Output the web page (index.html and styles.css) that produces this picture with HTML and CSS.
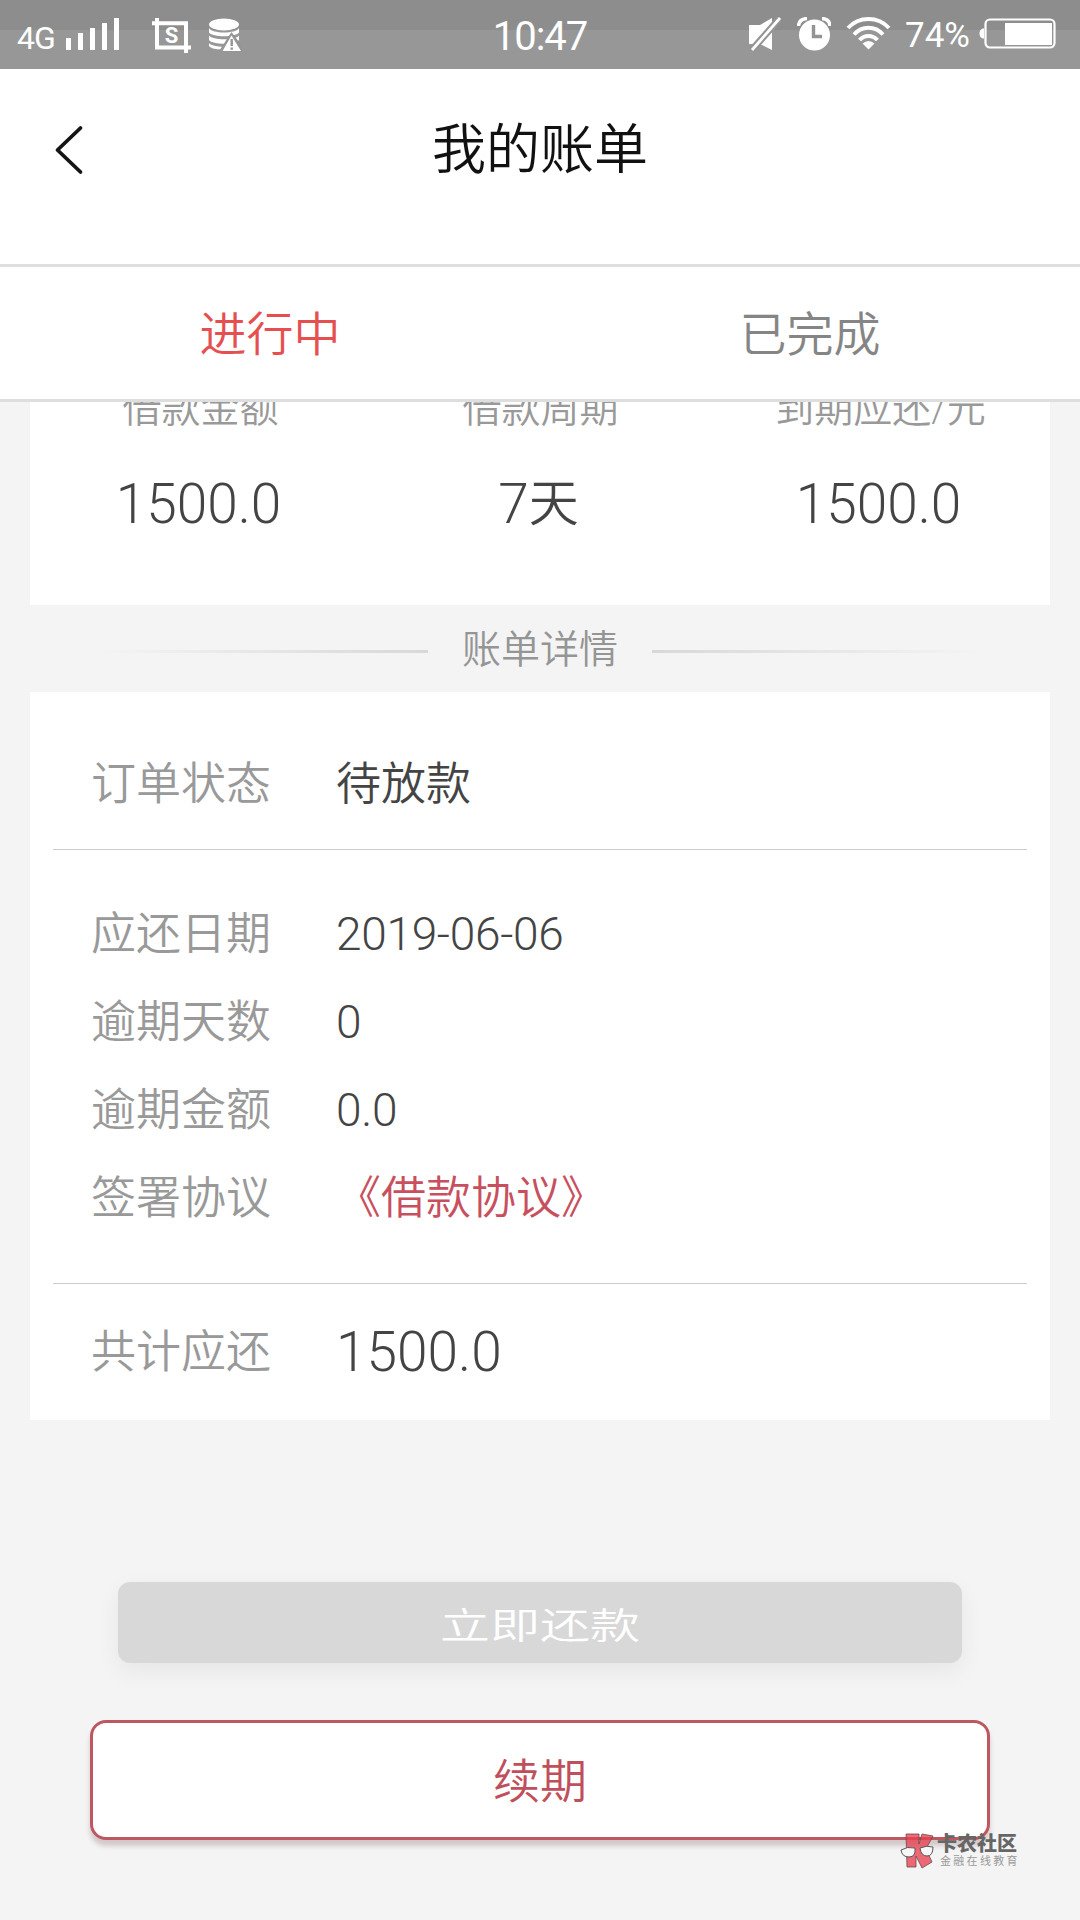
FILE: index.html
```html
<!DOCTYPE html>
<html lang="zh-CN">
<head>
<meta charset="utf-8">
<title>我的账单</title>
<link rel="stylesheet" href="styles.css">
</head>
<body>
<div class="screen">
  <div class="status">
    <div class="status-left">
      <span class="net">4G</span>
      <svg class="signal" width="54" height="33" viewBox="0 0 54 33" fill="#fff"><path d="M0 20h5v12H0zM12 15h5v17h-5zM24 10h5v22h-5zM36 5h5v27h-5zM48 0h5v32h-5z"/></svg>
      <svg class="crop" width="39" height="35" viewBox="0 0 39 35" fill="none" stroke="#fff"><path d="M0 5.2h34v25M5 0v29.600h34M34 26v9" stroke-width="4"/><text class="crop-s" x="19.500" y="24.500" text-anchor="middle">S</text></svg>
      <svg class="db" width="33" height="34" viewBox="0 0 33 34"><ellipse cx="15" cy="6.500" rx="15" ry="6" fill="#fff"/><path d="M0 10c3 6 27 6 30 0v4.500c-4 5-26 5-30 0zM0 17.500c4 5 26 5 30 0v4.500c-4 5-26 5-30 0zM0 25c4 5 26 5 30 0v2c-3 6-27 6-30 1z" fill="#fff"/><path d="M22.500 14L9.500 34H33V28z" fill="#959595"/><path d="M22.500 17.500L13.500 33h18.500z" fill="#fff"/><path d="M22.700 21v7M22.700 29.500v2.200" stroke="#959595" stroke-width="2.400"/></svg>
    </div>
    <div class="clock">10:47</div>
    <div class="status-right">
      <svg class="mute" width="32" height="34" viewBox="0 0 32 34"><path d="M0 8h11L23 1v32L11 27H0z" fill="#fff"/><path d="M2 34L31 1" stroke="#949494" stroke-width="7"/><path d="M3 33L31 1" stroke="#fff" stroke-width="2.800"/></svg>
      <svg class="alarm" width="34" height="34" viewBox="0 0 34 34"><circle cx="17.500" cy="18" r="15.500" fill="#fff"/><path d="M16.500 8v11.500H25" fill="none" stroke="#949494" stroke-width="3.400"/><path d="M1.500 9Q2 2 10 1.500M25 1.500q7.500.5 8 7.500" fill="none" stroke="#fff" stroke-width="3.500"/></svg>
      <svg class="wifi" width="46" height="34" viewBox="0 0 46 34" fill="none" stroke="#fff" stroke-width="4"><path d="M2 11C13-1 32-1 43 11M8 17.500c8-9 21-9 29 0M13.500 23c5-5.500 13-5.500 18 0"/><path d="M16.500 26.500q6-5 12 0l-6 6z" fill="#fff" stroke="none"/></svg>
      <span class="pct">74%</span>
      <svg class="battery" width="78" height="32" viewBox="0 0 78 32"><path d="M5 10.500v10C-1 21-1 10 5 10.500" fill="#fff"/><rect x="6.500" y="1.500" width="69" height="28" rx="4.500" fill="none" stroke="#fff" stroke-width="2.200"/><path d="M26 5h47v22H26z" fill="#fff"/></svg>
    </div>
  </div>

  <header class="header">
    <svg class="back" width="32" height="52" viewBox="0 0 32 52" fill="none" stroke="#151515" stroke-width="3.800" stroke-linecap="round" stroke-linejoin="round"><path d="M26.500 4L3.500 26l23 22"/></svg>
    <h1 class="title">我的账单</h1>
  </header>

  <nav class="tabs">
    <div class="tab active">进行中</div>
    <div class="tab">已完成</div>
  </nav>

  <main class="scroller">
    <section class="summary">
      <div class="stat"><span class="stat-label">借款金额</span><span class="stat-value">1500.0</span></div>
      <div class="stat"><span class="stat-label">借款周期</span><span class="stat-value">7<span class="unit">天</span></span></div>
      <div class="stat"><span class="stat-label">到期应还/元</span><span class="stat-value">1500.0</span></div>
    </section>

    <div class="divider"><i class="rule rule-l"></i><span class="divider-text">账单详情</span><i class="rule rule-r"></i></div>

    <section class="detail">
      <div class="row state"><span class="key">订单状态</span><span class="val">待放款</span></div>
      <div class="group">
        <div class="row"><span class="key">应还日期</span><span class="val num">2019-06-06</span></div>
        <div class="row"><span class="key">逾期天数</span><span class="val num">0</span></div>
        <div class="row"><span class="key">逾期金额</span><span class="val num">0.0</span></div>
        <div class="row"><span class="key">签署协议</span><span class="val link">《借款协议》</span></div>
      </div>
      <div class="row total"><span class="key">共计应还</span><span class="val sum">1500.0</span></div>
    </section>

    <div class="actions">
      <div class="btn pay"><span>立即还款</span></div>
      <div class="btn renew">续期</div>
    </div>
  </main>

  <div class="mark">
    <svg width="36" height="36" viewBox="0 0 36 36"><path d="M6 1h13v10l3-10 11 2-7 13 6 13-10 6-6-12v11H7z" fill="#e8404f" fill-opacity=".78" stroke="#6b4a4d" stroke-width=".8"/><path d="M1 17q6-4 14-2 1 9-6 9T1 17zM20 15q7-3 13-1 0 9-6 9t-7-8z" fill="#f6f6f6" stroke="#555" stroke-width="1"/></svg>
    <div class="mark-text"><b>卡农社区</b><small>金融在线教育</small></div>
  </div>
</div>
</body>
</html>
```
FILE: styles.css
```css
* { box-sizing: border-box; }
body {
  margin: 0;
  background: #f4f4f4;
  font-family: Roboto, "Noto Sans CJK SC", sans-serif;
  font-weight: 350;
  color: #444;
}
.screen {
  position: relative;
  width: 1080px;
  height: 1920px;
  overflow: hidden;
  display: flex;
  flex-direction: column;
}
.status {
  height: 69px;
  flex: none;
  display: grid;
  grid-template-columns: 1fr auto 1fr;
  background: linear-gradient(#8d8d8d 30px, #979797 30px);
  color: #fff;
  font-weight: 400;
}
.status-left, .status-right { display: flex; align-items: flex-start; }
.status-left { padding-left: 17px; }
.status-right { justify-content: flex-end; padding-right: 22px; }
.net { width: 49px; margin-top: 18px; font-size: 32px; line-height: 40px; letter-spacing: -1px; }
.signal { margin-top: 18px; }
.crop { margin: 18px 0 0 32px; }
.crop-s { font: 700 22px Roboto, sans-serif; fill: #fff; stroke: none; }
.db { margin: 18px 0 0 18px; }
.clock { font-size: 40px; line-height: 44px; margin-top: 15px; letter-spacing: -1px; }
.mute { margin: 17px 16px 0 0; }
.alarm { margin: 17px 15px 0 0; }
.wifi { margin: 17px 13px 0 0; }
.pct { margin: 16px 9px 0 0; font-size: 35px; line-height: 40px; }
.battery { margin: 18px 1px 0 0; }

.header {
  height: 195px;
  flex: none;
  display: grid;
  grid-template-columns: 160px 1fr 160px;
  align-items: start;
  background: #fff;
}
.back { margin: 55px 0 0 54px; }
.title {
  margin: 42px 0 0;
  font-size: 54px;
  line-height: 80px;
  font-weight: 350;
  text-align: center;
  color: #111;
}
.tabs {
  height: 138px;
  flex: none;
  display: grid;
  grid-template-columns: 1fr 1fr;
  background: #fff;
  border-top: 3px solid #dedede;
  border-bottom: 3px solid #dedede;
}
.tab {
  padding-top: 2px;
  font-size: 47px;
  line-height: 132px;
  text-align: center;
  color: #858585;
}
.active { color: #e64f4f; }

.scroller { flex: 1; overflow: hidden; padding: 0 30px; }
.summary {
  height: 243px;
  margin-top: -40px;
  padding-top: 19px;
  background: #fff;
  display: grid;
  grid-template-columns: repeat(3, 1fr);
}
.stat { display: flex; flex-direction: column; align-items: center; }
.stat-label { padding-left: 1px; font-size: 39px; line-height: 56px; color: #999; }
.stat-value { margin-top: 32px; padding-right: 3px; font-size: 55px; line-height: 70px; }
.unit { font-size: 50px; vertical-align: 2px; line-height: 1; }
.divider {
  height: 87px;
  display: flex;
  justify-content: center;
  align-items: center;
  gap: 34px;
  font-size: 39px;
  color: #959595;
}
.divider-text { padding-bottom: 5px; }
.rule { width: 330px; height: 3px; margin-top: 5px; }
.rule-l { background: linear-gradient(90deg, #f4f4f4, #d8d8d8); }
.rule-r { background: linear-gradient(90deg, #d8d8d8, #f4f4f4); }

.detail {
  height: 728px;
  padding: 0 23px;
  background: #fff;
}
.row { display: flex; align-items: center; padding-left: 38px; height: 88px; }
.key { width: 245px; font-size: 45px; color: #999; padding-bottom: 8px; }
.val { font-size: 45px; padding-bottom: 8px; }
.num { font-size: 46px; letter-spacing: -.3px; padding-bottom: 0; }
.sum { font-size: 55px; padding-bottom: 0; }
.link { color: #c8505e; }
.state { height: 158px; padding-top: 28px; border-bottom: 1px solid #ccc; }
.group { height: 434px; padding-top: 40px; border-bottom: 1px solid #ccc; }
.total { height: 136px; }

.actions {
  display: flex;
  flex-direction: column;
  align-items: center;
  padding-top: 162px;
  gap: 57px;
}
.btn { display: flex; justify-content: center; align-items: center; }
.pay {
  width: 844px;
  height: 81px;
  border-radius: 12px;
  background: #d8d8d8;
  box-shadow: 0 8px 24px rgba(0, 0, 0, .06);
  color: #fff;
  font-size: 36px;
}
.pay span { transform: scaleX(1.39); }
.renew {
  width: 900px;
  height: 120px;
  padding-bottom: 6px;
  border: 3px solid #bd5762;
  border-radius: 16px;
  background: #fff;
  box-shadow: 0 6px 5px rgba(90, 40, 50, .22);
  color: #c04f5c;
  font-size: 47px;
}
/* Community badge floating over the page */
.mark {
  position: absolute;
  left: 900px;
  top: 1833px;
  display: flex;
}
.mark-text { display: flex; flex-direction: column; margin-left: 1px; padding-top: 1px; }
.mark b { font-size: 20px; line-height: 21px; font-weight: 900; color: #666; }
.mark small { margin: 0 0 0 3px; font-size: 11px; line-height: 13px; letter-spacing: 2.3px; font-weight: 400; color: #999; }
```
